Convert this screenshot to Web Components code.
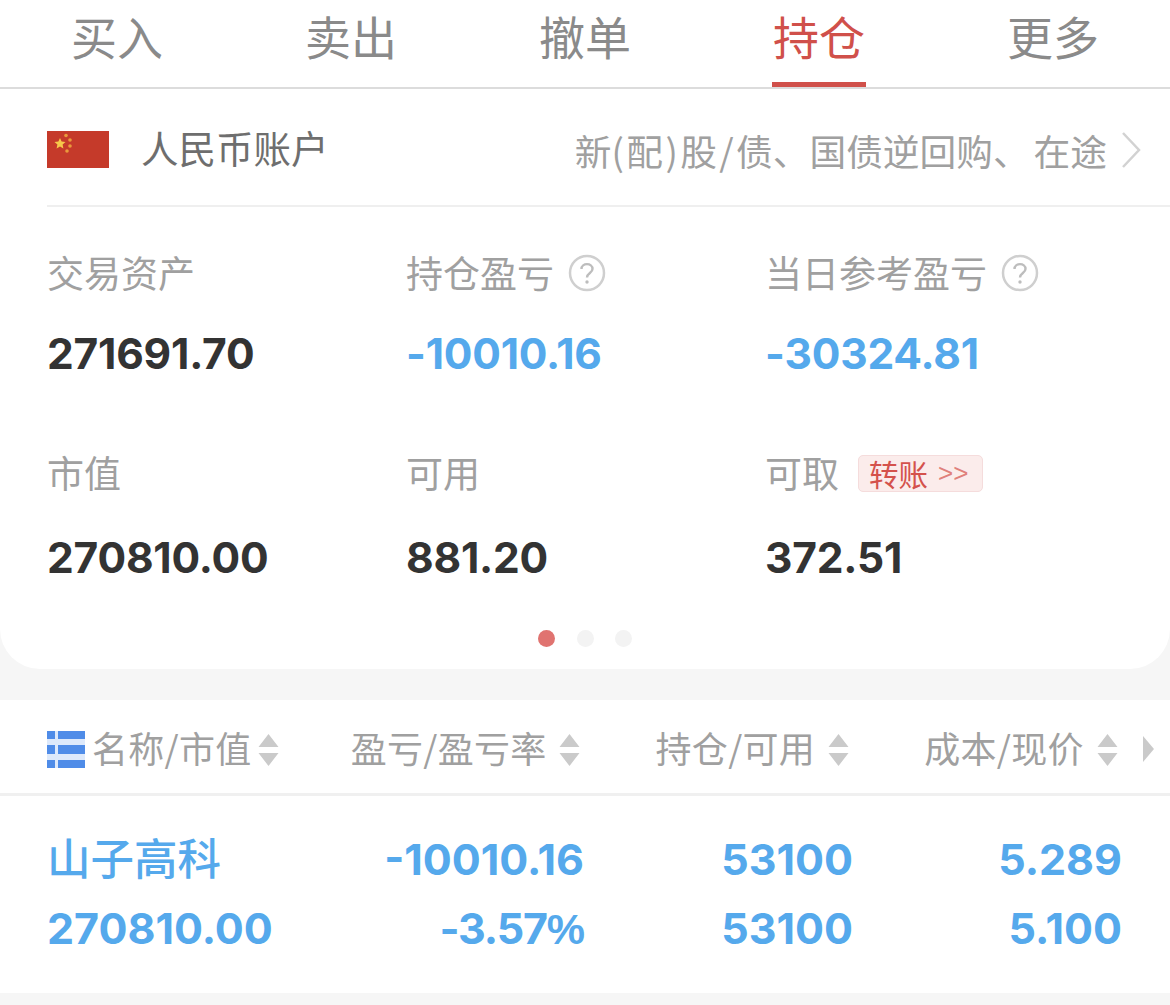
<!DOCTYPE html>
<html lang="zh-CN">
  <head>
    <meta charset="UTF-8" />
    <title>持仓</title>
    <style>
      body {
        margin: 0;
        background: #f6f6f6;
        font-family: "Noto Sans CJK SC", sans-serif;
      }
    </style>
  </head>
  <body>
    <trade-tabs active="持仓" items="买入,卖出,撤单,持仓,更多"></trade-tabs>
    <account-card>
      <stat-cell label="交易资产" value="271691.70"></stat-cell>
      <stat-cell label="持仓盈亏" value="-10010.16" tone="blue" help></stat-cell>
      <stat-cell label="当日参考盈亏" value="-30324.81" tone="blue" help></stat-cell>
      <stat-cell label="市值" value="270810.00" low></stat-cell>
      <stat-cell label="可用" value="881.20" low></stat-cell>
      <stat-cell label="可取" value="372.51" low transfer></stat-cell>
    </account-card>
    <holding-table></holding-table>

    <script>
      const NUM_FONT = `Inter, "Liberation Sans", sans-serif`;
      const CJK_FONT = `"Noto Sans CJK SC", sans-serif`;

      class TradeTabs extends HTMLElement {
        connectedCallback() {
          const active = this.getAttribute("active");
          const items = this.getAttribute("items").split(",");
          this.attachShadow({ mode: "open" }).innerHTML = `
            <style>
              :host {
                display: flex;
                height: 87px;
                border-bottom: 2px solid #dcdcdc;
                background: #fff;
                font-family: ${CJK_FONT};
              }
              .tab {
                flex: 1;
                display: flex;
                justify-content: center;
              }
              .tab span {
                box-sizing: border-box;
                height: 87px;
                width: 94px;
                padding-top: 2px;
                font-size: 46px;
                line-height: 66px;
                text-align: center;
                color: #8a8a8a;
              }
              .tab.on span {
                color: #d0504a;
                border-bottom: 5px solid #d0504a;
              }
            </style>
            ${items
              .map((t) => `<div class="tab ${t === active ? "on" : ""}"><span>${t}</span></div>`)
              .join("")}`;
        }
      }

      class AccountCard extends HTMLElement {
        connectedCallback() {
          this.attachShadow({ mode: "open" }).innerHTML = `
            <style>
              :host {
                display: block;
                height: 580px;
                background: #fff;
                border-radius: 0 0 40px 40px;
                font-family: ${CJK_FONT};
              }
              .head {
                display: flex;
                align-items: center;
                height: 118px;
                margin-left: 47px;
                border-bottom: 2px solid #efefef;
                box-sizing: border-box;
              }
              .flag { display: block; margin-right: 32px; margin-top: 4px; }
              .name {
                font-size: 37.5px;
                color: #6e6e6e;
                margin-top: -2px;
              }
              .note {
                margin-left: auto;
                font-size: 36.7px;
                color: #a0a0a0;
                white-space: nowrap;
                margin-top: 5px;
              }
              .note i { font-style: normal; letter-spacing: 2.4px; }
              .note i.p { letter-spacing: 4px; }
              .chev { display: block; margin: 5px 29px 0 14px; }
              .grid {
                display: grid;
                grid-template-columns: repeat(3, 359px);
                grid-template-rows: 200px 181px;
                padding: 40px 0 0 47px;
              }
              .dots {
                display: flex;
                justify-content: center;
                gap: 21.5px;
                margin: 2px 0 0 0;
              }
              .dots i {
                width: 17px;
                height: 17px;
                border-radius: 50%;
                background: #f3f3f3;
              }
              .dots i.on { background: #e07370; }
            </style>
            <div class="head">
              <svg class="flag" width="62" height="37" viewBox="0 0 62 37">
                <rect width="62" height="37" fill="#c53a2a" />
                <path d="M13 7 L14.6 10.6 L18.5 11 L15.6 13.6 L16.4 17.5 L13 15.5 L9.6 17.5 L10.4 13.6 L7.5 11 L11.4 10.6 Z" fill="#f6c84a" />
                <circle cx="19" cy="4.5" r="1.8" fill="#ea9a3c" />
                <circle cx="23" cy="9" r="1.8" fill="#ea9a3c" />
                <circle cx="23" cy="15" r="1.8" fill="#ea9a3c" />
                <circle cx="20" cy="20" r="1.8" fill="#ea9a3c" />
              </svg>
              <span class="name">人民币账户</span>
              <span class="note">新<i>(配)股/</i>债、国债逆回购<i class="p">、</i>在途</span>
              <svg class="chev" width="20" height="38" viewBox="0 0 20 38">
                <path d="M2 2 L18 19 L2 36" fill="none" stroke="#d2d2d2" stroke-width="2.5" />
              </svg>
            </div>
            <div class="grid"><slot></slot></div>
            <div class="dots"><i class="on"></i><i></i><i></i></div>`;
        }
      }

      class StatCell extends HTMLElement {
        connectedCallback() {
          const tone = this.getAttribute("tone") === "blue" ? "#55a9ec" : "#333";
          const help = this.hasAttribute("help")
            ? `<svg class="help" width="38" height="38" viewBox="0 0 38 38">
                 <circle cx="19" cy="19" r="17" fill="none" stroke="#cfcfcf" stroke-width="2.5" />
                 <path d="M13.5 15 C13.5 8.5 24.5 8.5 24.5 15 C24.5 19 19 19 19 23.5" fill="none" stroke="#bdbdbd" stroke-width="2.4" />
                 <circle cx="19" cy="28" r="1.7" fill="#bdbdbd" />
               </svg>`
            : "";
          const transfer = this.hasAttribute("transfer")
            ? `<span class="badge">转账<b>&gt;&gt;</b></span>`
            : "";
          this.attachShadow({ mode: "open" }).innerHTML = `
            <style>
              :host { display: block; }
              .label {
                display: flex;
                align-items: center;
                height: 50px;
                font-family: ${CJK_FONT};
                font-size: 37px;
                color: #a0a0a0;
              }
              .help { margin-left: 14px; margin-top: 2px; }
              .badge {
                display: flex;
                align-items: center;
                box-sizing: border-box;
                width: 125px;
                height: 37px;
                margin-left: 19px;
                margin-top: 2px;
                padding-left: 10px;
                border: 1px solid #f5dcdc;
                border-radius: 5px;
                background: #fbeceb;
                color: #d4524c;
                font-size: 29.5px;
                line-height: 37px;
              }
              .badge b {
                margin-left: 10px;
                font: 400 26px "Liberation Sans", sans-serif;
                color: #e0807b;
              }
              .value {
                margin-top: ${this.hasAttribute("low") ? 36 : 32}px;
                font-family: ${NUM_FONT};
                font-size: 42.5px;
                font-weight: 700;
                line-height: 50px;
                letter-spacing: -0.2px;
                color: ${tone};
              }
            </style>
            <div class="label">${this.getAttribute("label")}${help}${transfer}</div>
            <div class="value">${this.getAttribute("value")}</div>`;
        }
      }

      class SortMark extends HTMLElement {
        connectedCallback() {
          this.attachShadow({ mode: "open" }).innerHTML = `
            <style>
              :host { display: inline-block; width: 21px; height: 32px; margin-top: 6px; }
              svg { display: block; }
            </style>
            <svg width="21" height="32" viewBox="0 0 21 32">
              <path d="M10.5 0 L20.5 13 H0.5 Z M0.5 19 H20.5 L10.5 32 Z" fill="#cacaca" />
            </svg>`;
        }
      }
      customElements.define("sort-mark", SortMark);

      class HoldingTable extends HTMLElement {
        connectedCallback() {
          const rows = [
            ["山子高科", "-10010.16", "53100", "5.289"],
            ["270810.00", `<u>-3.57</u><em>%</em>`, "53100", "5.100"],
          ];
          const cell = (t, i) => `<div class="c${i}">${t}</div>`;
          this.attachShadow({ mode: "open" }).innerHTML = `
            <style>
              :host {
                display: block;
                margin-top: 31px;
                background: #fff;
                font-family: ${CJK_FONT};
              }
              .head {
                display: flex;
                align-items: center;
                height: 93px;
                border-bottom: 3px solid #f0f0f0;
                padding-left: 47px;
                font-size: 36px;
                color: #a0a0a0;
                white-space: nowrap;
              }
              .head span { display: block; letter-spacing: 0.3px; }
              svg { display: block; }
              .rows {
                display: grid;
                grid-template-columns: 240px 297px 269px 269px;
                grid-auto-rows: 69px;
                padding: 29px 0 30px 47px;
                font-family: ${NUM_FONT};
                font-size: 43px;
                font-weight: 700;
                line-height: 69px;
                color: #55a9ec;
                white-space: nowrap;
              }
              .c1, .c2, .c3 { text-align: right; }
              u { text-decoration: none; letter-spacing: -1.2px; }
              em {
                font: 700 43px "Liberation Sans", sans-serif;
                letter-spacing: -1px;
              }
              .cjk {
                font-family: ${CJK_FONT};
                font-weight: 500;
                font-size: 43.5px;
                margin-top: -3px;
              }
            </style>
            <div class="head">
              <svg width="38" height="37" viewBox="0 0 38 37" style="margin:6px 7px 0 0">
                <rect width="38" height="37" fill="#dde9fb" />
                <path d="M0 0h8v8H0zM11 0h27v8H11zM0 14h8v9H0zM11 14h27v9H11zM0 29h8v8H0zM11 29h27v8H11z" fill="#4f8ce8" />
              </svg>
              <span>名称/市值</span>
              <sort-mark style="margin-left:6px"></sort-mark>
              <span style="margin-left:72px">盈亏/盈亏率</span>
              <sort-mark style="margin-left:12px"></sort-mark>
              <span style="margin-left:76px">持仓/可用</span>
              <sort-mark style="margin-left:13px"></sort-mark>
              <span style="margin-left:75px">成本/现价</span>
              <sort-mark style="margin-left:13px"></sort-mark>
              <svg width="11" height="26" viewBox="0 0 11 26" style="margin:4px 0 0 25px">
                <path d="M0 0 L11 13 L0 26 Z" fill="#cacaca" />
              </svg>
            </div>
            <div class="rows">
              <div class="c0 cjk">${rows[0][0]}</div>${rows[0].slice(1).map((t, i) => cell(t, i + 1)).join("")}
              ${rows[1].map(cell).join("")}
            </div>`;
        }
      }

      customElements.define("trade-tabs", TradeTabs);
      customElements.define("stat-cell", StatCell);
      customElements.define("account-card", AccountCard);
      customElements.define("holding-table", HoldingTable);
    </script>
  </body>
</html>
